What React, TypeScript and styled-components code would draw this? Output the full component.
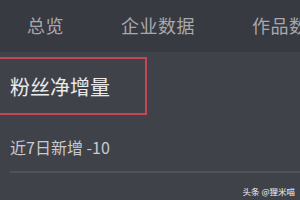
import styled, { createGlobalStyle } from "styled-components";

const GlobalStyle = createGlobalStyle`
  html, body {
    margin: 0;
    padding: 0;
    background: #40424a;
  }
  body {
    font-family: "Noto Sans CJK SC", "Noto Sans", sans-serif;
  }
`;

const Page = styled.div`
  width: 300px;
  height: 200px;
  overflow: hidden;
  background: #40424a;
  display: flex;
  flex-direction: column;
`;

const TabBar = styled.div`
  height: 52px;
  flex-shrink: 0;
  background: #383a42;
  display: flex;
  align-items: center;
  padding-left: 27px;
  gap: 57px;
  white-space: nowrap;
`;

const Tab = styled.div`
  font-size: 18px;
  line-height: 1;
  color: #a7a8ad;
  letter-spacing: 0.5px;
  margin-top: -2px;
`;

const Body = styled.div`
  flex: 1;
  display: flex;
  flex-direction: column;
`;

const Highlight = styled.div`
  margin-top: 5px;
  margin-left: -10px;
  width: 135px;
  height: 54px;
  border: 2px solid #c64655;
  border-left: none;
  display: flex;
  align-items: center;
  padding-left: 20px;
  box-sizing: content-box;
`;

const Title = styled.div`
  font-size: 20px;
  line-height: 1;
  color: #ebebec;
  margin-top: 2px;
  white-space: nowrap;
`;

const Stat = styled.div`
  margin: 24px 0 0 10px;
  font-size: 16px;
  line-height: 1;
  color: #c9cacd;
`;

const Divider = styled.div`
  margin: 16px 0 0 10px;
  height: 2px;
  background: #50525a;
`;

const Watermark = styled.div`
  align-self: flex-end;
  margin: 14px 5px 0 0;
  font-size: 8.5px;
  line-height: 1;
  color: #f2f2f2;
`;

export default function App() {
  return (
    <Page>
      <GlobalStyle />
      <TabBar>
        <Tab>总览</Tab>
        <Tab>企业数据</Tab>
        <Tab>作品数据</Tab>
      </TabBar>
      <Body>
        <Highlight>
          <Title>粉丝净增量</Title>
        </Highlight>
        <Stat>近7日新增 -10</Stat>
        <Divider />
        <Watermark>头条 @狸米喵</Watermark>
      </Body>
    </Page>
  );
}
